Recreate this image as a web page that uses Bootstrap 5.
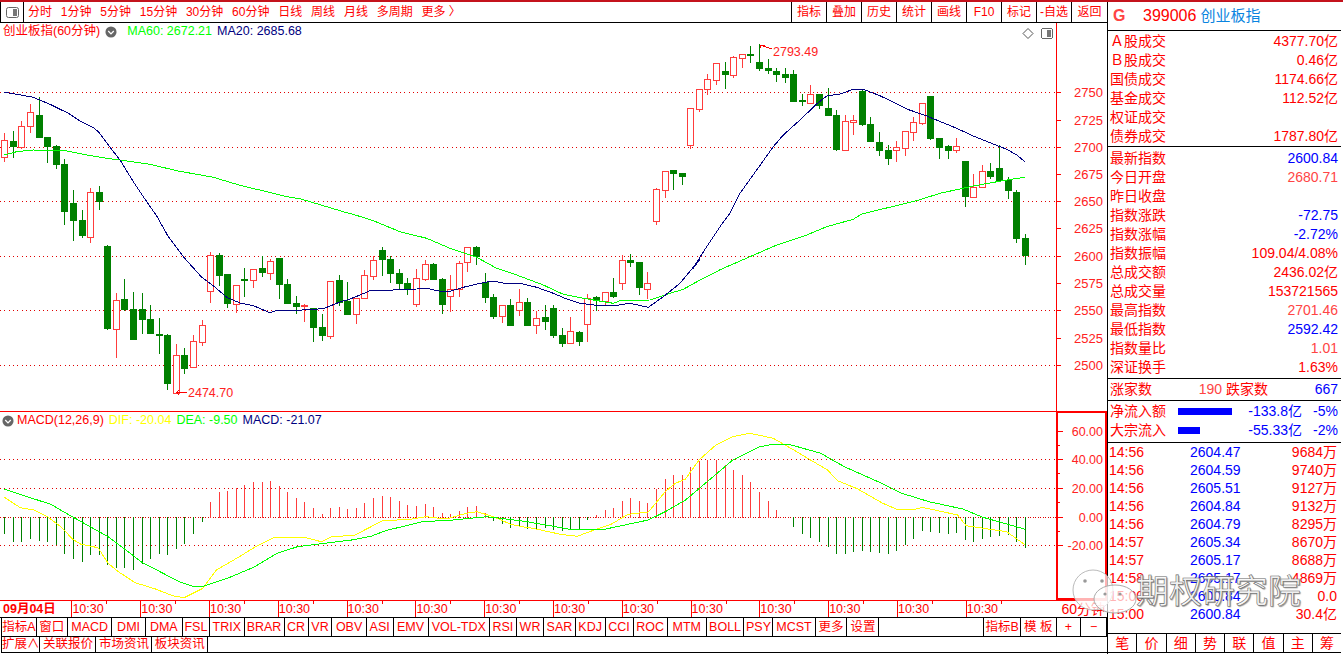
<!DOCTYPE html>
<html lang="zh-CN">
  <head>
    <meta charset="UTF-8" />
    <title>创业板指 60分钟</title>
    <link href="https://cdn.jsdelivr.net/npm/bootstrap@5.3.0/dist/css/bootstrap.min.css" rel="stylesheet" />
    <style>
      html, body { margin: 0; background: #fff; overflow: hidden; }
      body, svg text { font-family: "Liberation Sans", "Noto Sans CJK SC", sans-serif; }
      .app { width: 1343px; height: 654px; border-top: 2px solid #c4131c; color: #f00; position: relative; }
      .left-col { width: 1107px; }
      .tool-row { height: 21px; border-bottom: 1px solid #000; font-size: 12px; line-height: 20px; }
      .tool-icon { width: 24px; border-left: 1px solid #000; border-right: 1px solid #000; }
      .tool-links { gap: 8.8px; padding-left: 4px; }
      .tool-cell { width: 35px; border-left: 1px solid #000; text-align: center; }
      .tool-cell:last-child { width: 36px; }
      .chart-box { height: 389px; border-bottom: 1px solid #f00; position: relative; }
      .macd-box { height: 188px; position: relative; }
      .chart-box svg, .macd-box svg { display: block; }
      .legend { position: absolute; left: 3px; top: 0; font-size: 12.5px; line-height: 17px; white-space: nowrap; display: flex; align-items: center; }
      .macd-legend { left: 2px; top: 0; }
      .legend span { margin-right: 5px; }
      .legend svg { flex: none; }
      .dot-main { margin: 0 10px 0 5px; }
      .dot-macd { margin-right: 3px; }
      .c-ma60 { color: #0f0; }
      .c-ma20 { color: #000080; }
      .c-dif { color: #ff0; }
      .date-row { height: 18px; border-top: 1px solid #f00; border-bottom: 1px solid #000; font-size: 12.5px; line-height: 16px; }
      .date-lab { width: 71.4px; padding-left: 3px; font-weight: 700; }
      .date-tick { width: 68.8px; border-left: 1px solid #f00; position: relative; }
      .date-tick::after { content: ""; position: absolute; left: 34px; top: 0; height: 3px; border-left: 1px solid #f00; }
      .date-end { margin-left: auto; width: 50px; text-align: right; padding-right: 2px; font-size: 14px; white-space: nowrap; }
      .tab-row { border-bottom: 1px solid #000; font-size: 12.5px; white-space: nowrap; border-left: 1px solid #000; margin-left: 1px; }
      .tab-a { height: 19px; line-height: 18px; }
      .tab-b { height: 16px; line-height: 15px; }
      .tab-cell { border-right: 1px solid #000; text-align: center; overflow: visible; }
      .side { width: 234px; border-left: 1px solid #000; font-size: 14px; }
      .side-head { height: 29px; border-bottom: 1px solid #000; line-height: 26px; padding-left: 5px; }
      .code-g { font-size: 16px; font-weight: 700; color: #f44; width: 30px; }
      .code-no { font-size: 16px; margin-right: 4px; }
      .code-name { font-size: 15px; color: #0a84e0; }
      .side-block { border-bottom: 1px solid #000; padding: 1px 3px 0 2px; }
      .block-a { height: 116px; }
      .block-b { height: 232px; padding-top: 2px; }
      .block-c { height: 22px; line-height: 21px; padding-top: 0; }
      .block-d { height: 42px; }
      .kv-row { height: 19px; line-height: 19px; }
      .soft { color: #f44; }
      .c-blue { color: #00f; }
      .flow-lab { width: 56px; }
      .flow-track { width: 54px; margin-left: 12px; height: 7px; }
      .flow-bar { height: 7px; background: #00f; }
      .flow-val { width: 70px; text-align: right; }
      .flow-pct { margin-left: auto; }
      .tick-list { height: 190px; padding: 0 4px 0 1px; }
      .tick-row { height: 18px; line-height: 18px; }
      .tick-time { width: 81px; }
      .tick-vol { margin-left: auto; }
      .side-btns { height: 20px; border-top: 1px solid #000; border-bottom: 1px solid #000; line-height: 18px; }
      .side-btns span { flex: 1 1 0; text-align: center; border-left: 1px solid #000; }
      .side-btns span:first-child { border-left: 0; }
      .mark-icon { position: absolute; left: 1072px; top: 566px; }
      .mark-text { position: absolute; left: 1136px; top: 570px; font-size: 33px; line-height: 40px; color: rgba(255, 255, 255, 0.85); -webkit-text-stroke: 0.6px #666; text-shadow: 1px 1px 1px #999; white-space: nowrap; }
    </style>
  </head>

  <body>
    <div class="app d-flex">
      <div class="left-col d-flex flex-column">
        <!-- 工具栏 -->
        <div class="tool-row d-flex">
          <div class="tool-icon d-flex align-items-center justify-content-center">
            <svg width="13" height="11" viewBox="0 0 13 11"><rect x="0.5" y="0.5" width="12" height="10" rx="2" fill="#fff" stroke="#666"></rect><rect x="7" y="2" width="4" height="7" fill="#777"></rect></svg>
          </div>
          <div class="tool-links d-flex">
            <span>分时</span><span>1分钟</span><span>5分钟</span><span>15分钟</span><span>30分钟</span><span>60分钟</span><span>日线</span><span>周线</span><span>月线</span><span>多周期</span><span>更多 〉</span>
          </div>
          <div class="ms-auto d-flex">
            <span class="tool-cell">指标</span><span class="tool-cell">叠加</span><span class="tool-cell">历史</span><span class="tool-cell">统计</span><span class="tool-cell">画线</span><span class="tool-cell">F10</span><span class="tool-cell">标记</span><span class="tool-cell">-自选</span><span class="tool-cell">返回</span>
          </div>
        </div>

        <!-- K线 -->
        <div class="chart-box">
          <svg id="kline" width="1107" height="388" viewBox="0 23 1107 388"></svg>
          <div class="legend"><span class="me-0">创业板指(60分钟)</span>
            <svg class="dot-main" width="12" height="12" viewBox="0 0 13 13"><circle cx="6.5" cy="6.5" r="6" fill="#666"></circle><path d="M3.5 5.5 6.5 8.5 9.5 5.5" fill="none" stroke="#fff" stroke-width="1.4"></path></svg>
            <span class="c-ma60">MA60: 2672.21</span><span class="c-ma20">MA20: 2685.68</span>
          </div>
        </div>

        <!-- MACD -->
        <div class="macd-box">
          <svg id="macd" width="1107" height="188" viewBox="0 412 1107 188"></svg>
          <div class="legend macd-legend">
            <svg class="dot-macd" width="12" height="12" viewBox="0 0 13 13"><circle cx="6.5" cy="6.5" r="6" fill="#666"></circle><path d="M3.5 5.5 6.5 8.5 9.5 5.5" fill="none" stroke="#fff" stroke-width="1.4"></path></svg>
            <span>MACD(12,26,9)</span><span class="c-dif">DIF: -20.04</span><span class="c-ma60">DEA: -9.50</span><span class="c-ma20">MACD: -21.07</span>
          </div>
        </div>

        <!-- 时间轴 -->
        <div class="date-row d-flex" id="dates"><span class="date-lab">09月04日</span></div>

        <div class="tab-row tab-a d-flex" id="tabsA"></div>
        <div class="tab-row tab-b d-flex" id="tabsB"></div>
      </div>

      <!-- 右侧行情 -->
      <div class="side d-flex flex-column">
        <div class="side-head d-flex align-items-center"><span class="code-g">G</span><span class="code-no">399006</span><span class="code-name">创业板指</span></div>
        <div class="side-block block-a">
          <div class="kv-row d-flex justify-content-between"><span>Ａ股成交</span><span>4377.70亿</span></div>
          <div class="kv-row d-flex justify-content-between"><span>Ｂ股成交</span><span>0.46亿</span></div>
          <div class="kv-row d-flex justify-content-between"><span>国债成交</span><span>1174.66亿</span></div>
          <div class="kv-row d-flex justify-content-between"><span>基金成交</span><span>112.52亿</span></div>
          <div class="kv-row d-flex justify-content-between"><span>权证成交</span><span></span></div>
          <div class="kv-row d-flex justify-content-between"><span>债券成交</span><span>1787.80亿</span></div>
        </div>
        <div class="side-block block-b">
          <div class="kv-row d-flex justify-content-between"><span>最新指数</span><span class="c-blue">2600.84</span></div>
          <div class="kv-row d-flex justify-content-between"><span>今日开盘</span><span class="soft">2680.71</span></div>
          <div class="kv-row d-flex justify-content-between"><span>昨日收盘</span><span></span></div>
          <div class="kv-row d-flex justify-content-between"><span>指数涨跌</span><span class="c-blue">-72.75</span></div>
          <div class="kv-row d-flex justify-content-between"><span>指数涨幅</span><span class="c-blue">-2.72%</span></div>
          <div class="kv-row d-flex justify-content-between"><span>指数振幅</span><span>109.04/4.08%</span></div>
          <div class="kv-row d-flex justify-content-between"><span>总成交额</span><span>2436.02亿</span></div>
          <div class="kv-row d-flex justify-content-between"><span>总成交量</span><span>153721565</span></div>
          <div class="kv-row d-flex justify-content-between"><span>最高指数</span><span class="soft">2701.46</span></div>
          <div class="kv-row d-flex justify-content-between"><span>最低指数</span><span class="c-blue">2592.42</span></div>
          <div class="kv-row d-flex justify-content-between"><span>指数量比</span><span class="soft">1.01</span></div>
          <div class="kv-row d-flex justify-content-between"><span>深证换手</span><span>1.63%</span></div>
        </div>
        <div class="side-block block-c d-flex justify-content-between"><span>涨家数</span><span><span class="soft">190</span> 跌家数</span><span class="c-blue">667</span></div>
        <div class="side-block block-d">
          <div class="kv-row d-flex align-items-center"><span class="flow-lab">净流入额</span><span class="flow-track"><span class="flow-bar d-block" style="width:54px"></span></span><span class="flow-val c-blue">-133.8亿</span><span class="flow-pct c-blue">-5%</span></div>
          <div class="kv-row d-flex align-items-center"><span class="flow-lab">大宗流入</span><span class="flow-track"><span class="flow-bar d-block" style="width:22px"></span></span><span class="flow-val c-blue">-55.33亿</span><span class="flow-pct c-blue">-2%</span></div>
        </div>
        <div class="tick-list" id="ticks"></div>
        <div class="side-btns d-flex"><span>笔</span><span>价</span><span>细</span><span>势</span><span>联</span><span>值</span><span>主</span><span>筹</span></div>
      </div>

      <!-- 水印 -->
      <svg class="mark-icon" width="68" height="50" viewBox="1072 568 68 50">
        <ellipse cx="1093" cy="590" rx="20" ry="20" fill="#fff" fill-opacity="0.7" stroke="#bbb"></ellipse>
        <ellipse cx="1115" cy="599" rx="21" ry="14" fill="#fff" fill-opacity="0.7" stroke="#aaa"></ellipse>
        <circle cx="1085" cy="581" r="1.8" fill="#999"></circle><circle cx="1102" cy="581" r="1.8" fill="#999"></circle>
        <circle cx="1105" cy="594" r="1.6" fill="#999"></circle><circle cx="1120" cy="594" r="1.6" fill="#999"></circle>
      </svg>
      <div class="mark-text">期权研究院</div>
    </div>

    <script>
      const NS = 'http://www.w3.org/2000/svg';
      function add(svg, tag, attrs, text) {
        const el = document.createElementNS(NS, tag);
        for (const k in attrs) el.setAttribute(k, attrs[k]);
        if (text) el.textContent = text;
        svg.appendChild(el);
        return el;
      }
      const barX = (i) => Math.round(4.33 + i * 8.575);

      // K线数据: 类型(1阳0阴), 实体上, 实体下, 影线上, 影线下 (放大图坐标 / 3 + 偏移)
      const k1 = [[1,241,292,219,302],[0,243,257,213,290],[1,199,262,183,265],[1,157,199,132,216],[0,165,231,112,231],[0,231,257,231,305],[0,258,312,254,323],[0,312,453,297,492],[0,429,480,390,540],[0,480,525,450,531],[1,397,532,384,546],[0,396,423,378,446],[0,558,804,555,807],[1,721,806,699,891],[0,717,747,657,750],[0,747,837,696,837],[0,747,777,699,819],[0,777,819,735,819],[0,822,824,774,879],[0,825,969,822,987],[1,886,998,852,1000],[0,885,924,864,939],[1,844,922,825,922],[1,796,845,780,855],[1,586,692,576,726],[0,585,645,579,676],[0,642,729,642,741],[1,676,731,676,756],[0,657,659,624,708],[1,628,661,628,681],[0,624,636,588,648],[1,604,638,598,657],[0,594,672,594,714],[0,672,729,657,729],[0,729,738,708,759],[1,735,739,732,783],[0,745,801,745,843],[0,801,825,762,840],[1,664,827,664,834],[0,660,726,645,735],[0,723,762,666,762]];
      const k2 = [[1,295,341,295,369],[1,226,293,210,293],[1,181,227,168,237],[0,150,177,141,225],[0,177,219,168,246],[0,219,249,207,264],[0,249,268,234,282],[1,235,311,207,318],[1,193,236,180,240],[0,192,237,190,237],[0,237,312,234,339],[1,268,287,225,333],[1,190,268,183,288],[1,142,187,142,213],[0,141,168,138,192],[0,246,291,219,306],[0,291,348,282,354],[1,316,349,316,366],[0,315,375,297,375],[1,307,329,267,345],[0,306,375,294,375],[1,355,376,333,399],[0,351,363,315,387],[0,324,405,315,411],[0,405,429,384,438],[1,394,430,351,430],[0,396,423,393,435],[1,293,371,282,423],[0,291,299,288,330],[1,277,302,277,316],[0,276,288,234,291],[1,181,248,165,267],[0,181,186,162,198],[0,186,261,186,282],[1,250,266,216,294]];
      const k3 = [[1,478,572,474,582],[1,424,479,424,501],[0,420,429,420,477],[0,429,438,429,462],[1,235,345,235,354],[1,178,236,178,243],[1,148,176,132,192],[1,100,149,100,162],[0,123,132,96,174],[1,82,134,78,141],[1,73,83,73,111],[0,72,75,48,96],[0,96,114,42,120],[0,115,120,87,129],[0,123,132,114,153],[0,132,141,114,156],[0,132,213,120,213],[0,209,212,192,225],[1,193,218,165,218],[0,192,225,192,234],[0,234,255,174,255],[0,255,357,240,360],[1,274,359,255,359],[1,271,275,255,312],[0,183,282,180,285],[0,282,333,261,333],[0,336,360,306,375],[0,360,384,345,402],[1,352,359,333,393],[1,304,353,304,375],[1,277,305,261,330],[1,220,278,220,282],[0,198,324,198,327],[0,324,351,324,384],[0,348,360,345,384],[1,349,361,324,366],[0,393,498,393,528],[1,471,500,432,500],[1,424,472,405,472],[0,423,438,399,444],[0,414,450,345,450],[0,450,480,441,504],[0,486,624,480,636],[0,624,675,612,702]];

      const UP = '#ff3c3c', DOWN = '#008000', RED = '#f00';
      const kSvg = document.getElementById('kline');
      kSvg.setAttribute('shape-rendering', 'crispEdges');

      // 价格网格
      [92, 147, 201, 256, 310, 365].forEach((y) => {
        add(kSvg, 'line', { x1: 0, x2: 1056, y1: y + 0.5, y2: y + 0.5, stroke: '#e00000', 'stroke-dasharray': '1 3.3' });
      });
      add(kSvg, 'line', { x1: 1056.5, x2: 1056.5, y1: 23, y2: 411, stroke: RED });
      [[2750, 92], [2725, 120], [2700, 147], [2675, 174], [2650, 201], [2625, 228], [2600, 256], [2575, 283], [2550, 310], [2525, 338], [2500, 365]].forEach(([p, y]) => {
        add(kSvg, 'line', { x1: 1057, x2: 1061, y1: y + 0.5, y2: y + 0.5, stroke: RED });
        add(kSvg, 'text', { x: 1103, y: y + 5, 'text-anchor': 'end', 'font-size': 13, fill: '#f22', 'shape-rendering': 'auto' }, String(p));
      });

      function candle(i, c, off) {
        const y = (v) => Math.round(off + v / 3);
        const x = barX(i);
        const col = c[0] ? UP : DOWN;
        add(kSvg, 'line', { x1: x + 0.5, x2: x + 0.5, y1: y(c[3]), y2: y(c[4]) + 1, stroke: col });
        if (c[0]) {
          add(kSvg, 'rect', { x: x - 3 + 0.5, y: y(c[1]) + 0.5, width: 6, height: Math.max(1, y(c[2]) - y(c[1])), fill: '#fff', stroke: col });
        } else {
          add(kSvg, 'rect', { x: x - 3, y: y(c[1]), width: 7, height: Math.max(1, y(c[2]) - y(c[1]) + 1), fill: col });
        }
      }
      k1.forEach((c, i) => candle(i, c, 60));
      k2.forEach((c, i) => candle(i + 41, c, 200));
      k3.forEach((c, i) => candle(i + 76, c, 30));

      function line(svg, pts, col) {
        add(svg, 'polyline', { points: pts.map((p) => p.join(',')).join(' '), fill: 'none', stroke: col, 'stroke-width': 1 });
      }
      const z = (arr, ox, oy, sx, sy) => arr.map((p) => [(ox + p[0] / sx).toFixed(1), (oy + p[1] / (sy || sx)).toFixed(1)]);

      const ma60 = [].concat(
        z([[13,285],[50,275],[100,270],[140,271],[200,273],[260,285],[320,295],[360,300],[450,313],[530,332],[640,352],[720,376],[820,400],[860,410],[900,416],[960,434],[1040,458]], 0, 60, 3),
        z([[0,40],[70,62],[150,95],[230,115],[300,145],[380,172],[440,205],[500,225],[580,255],[640,283],[700,295],[790,310],[810,302],[900,300],[960,280],[1000,268],[1050,240]], 350, 200, 3),
        z([[243,718],[330,680],[410,645],[500,615],[560,590],[640,568],[665,552],[830,512],[900,490],[1000,468],[1100,450],[1155,442]], 640, 30, 3));
      const ma20 = [].concat(
        z([[13,97],[50,103],[100,112],[150,133],[205,160],[240,183],[280,203],[295,215],[330,262],[360,300],[400,365],[440,425],[470,468],[505,530],[550,590],[605,652],[640,677],[680,712],[720,729],[760,737],[810,758],[830,751],[890,751],[970,746],[1020,726]], 0, 60, 3),
        z([[0,297],[30,285],[65,270],[130,270],[200,267],[235,266],[270,274],[300,274],[340,262],[390,250],[430,243],[470,251],[510,250],[560,262],[610,280],[650,297],[690,310],[740,316],[800,316],[840,310],[895,322],[940,290],[990,250],[1050,178]], 350, 200, 3),
        z([[157,718],[200,650],[240,590],[270,550],[300,490],[350,420],[400,350],[430,315],[480,270],[530,222],[560,198],[600,192],[640,178],[670,178],[720,197],[800,237],[860,258],[950,295],[1000,318],[1060,342],[1100,358],[1130,375],[1155,395]], 640, 30, 3));
      line(kSvg, ma60, '#0f0');
      line(kSvg, ma20, '#000080');

      // 最高最低标注
      add(kSvg, 'path', { d: 'M176 392.5H187M176 392.5l3-2M176 392.5l3 2', stroke: RED, fill: 'none' });
      add(kSvg, 'text', { x: 188, y: 397, 'font-size': 12.5, fill: '#f22', 'shape-rendering': 'auto' }, '2474.70');
      add(kSvg, 'path', { d: 'M760 45L772 49M760 45h5M760 45v3', stroke: RED, fill: 'none' });
      add(kSvg, 'text', { x: 773, y: 56, 'font-size': 12.5, fill: '#f22', 'shape-rendering': 'auto' }, '2793.49');

      // 右上小图标
      add(kSvg, 'path', { d: 'M1028 28.5l5 5-5 5-5-5z', fill: '#fff', stroke: '#555', 'shape-rendering': 'auto' });
      add(kSvg, 'rect', { x: 1041.5, y: 28.5, width: 11, height: 10, rx: 2, fill: '#fff', stroke: '#666' });
      add(kSvg, 'rect', { x: 1047, y: 30, width: 4, height: 7, fill: '#777' });

      // MACD
      const mSvg = document.getElementById('macd');
      mSvg.setAttribute('shape-rendering', 'crispEdges');
      [459, 488, 545].forEach((y) => {
        add(mSvg, 'line', { x1: 0, x2: 1056, y1: y + 0.5, y2: y + 0.5, stroke: '#e00000', 'stroke-dasharray': '1 3.3' });
      });
      add(mSvg, 'line', { x1: 0, x2: 1056, y1: 517.5, y2: 517.5, stroke: '#e00000', 'stroke-dasharray': '1 1.5' });

      const bars = [383,407,407,398,404,407,416,443,458,467,446,446,476,485,485,491,473,458,443,446,428,413,383,347,
        291,261,258,249,240,231,231,228,243,261,279,291,309,327,309,306,312,309,294,279,273,276,288,300,303,297,306,324,327,318,306,303,324,
        345,354,366,363,369,369,366,372,375,369,369,342,
        330,315,309,288,279,288,294,252,222,210,210,186,168,165,165,180,195,210,231,261,288,315,
        0,363,384,396,408,422,444,444,438,435,438,441,444,435,417,399,375,378,381,384,381,402,408,399,393,390,387,408,426];
      const zero = 517;
      bars.forEach((v, i) => {
        if (!v) return;
        const y = Math.round(405 + v / 3);
        const x = barX(i) + 0.5;
        add(mSvg, 'line', { x1: x, x2: x, y1: Math.min(y, zero), y2: Math.max(y, zero) + 1, stroke: v > 337 ? DOWN : UP, 'stroke-width': 1 });
      });

      const dif = [].concat(
        z([[13,277],[60,308],[100,315],[140,335],[180,365],[215,403],[240,418],[290,428],[320,475],[350,500],[400,533],[460,552],[510,572],[545,578],[600,550],[640,495],[700,460],[760,423],[810,398],[900,397],[950,410],[980,396],[1050,390],[1130,348],[1220,342],[1260,335],[1320,342],[1380,325],[1410,320],[1460,335],[1510,358],[1560,368]], 0, 405, 2.958, 3),
        z([[0,368],[90,388],[140,394],[190,375],[240,358],[290,328],[350,321],[400,260],[430,235],[460,222],[500,165],[550,120],[600,95],[650,85],[720,100],[780,135],[880,195],[910,227],[970,252],[1040,293],[1085,313],[1140,313],[1160,307],[1265,330],[1290,362],[1410,380],[1465,420]], 530, 405, 2.958, 3));
      const dea = [].concat(
        z([[13,253],[90,278],[150,298],[210,333],[320,395],[420,472],[530,530],[570,544],[605,543],[680,517],[750,487],[820,445],[880,425],[960,415],[1040,405],[1100,393],[1140,377],[1250,350],[1340,345],[1440,335],[1480,340],[1560,350]], 0, 405, 2.958, 3),
        z([[0,352],[60,362],[130,375],[220,373],[280,360],[350,345],[400,320],[460,285],[530,225],[600,165],[680,125],[720,118],[770,119],[860,145],[930,185],[1030,230],[1100,265],[1180,290],[1280,312],[1340,337],[1465,373]], 530, 405, 2.958, 3));
      line(mSvg, dif, '#ff0');
      line(mSvg, dea, '#0f0');

      // MACD 右轴红框
      add(mSvg, 'rect', { x: 1056, y: 412, width: 2, height: 188, fill: RED });
      add(mSvg, 'rect', { x: 1105, y: 412, width: 2, height: 188, fill: RED });
      add(mSvg, 'rect', { x: 1056, y: 598, width: 51, height: 2, fill: RED });
      add(mSvg, 'rect', { x: 1056, y: 411, width: 51, height: 2, fill: RED });
      [[60, 431], [40, 459], [20, 488], [0, 517], [-20, 545]].forEach(([v, y]) => {
        add(mSvg, 'line', { x1: 1058, x2: 1063, y1: y + 0.5, y2: y + 0.5, stroke: RED });
        add(mSvg, 'text', { x: 1103, y: y + 4.5, 'text-anchor': 'end', 'font-size': 12.5, fill: '#f22', 'shape-rendering': 'auto' }, v.toFixed(2));
      });
      [445, 473, 502, 531].forEach((y) => {
        add(mSvg, 'line', { x1: 1058, x2: 1060, y1: y + 0.5, y2: y + 0.5, stroke: RED });
      });

      // 时间轴
      const dates = document.getElementById('dates');
      for (let i = 0; i < 14; i++) {
        const s = document.createElement('span');
        s.className = 'date-tick';
        s.textContent = '10:30';
        dates.appendChild(s);
      }
      const endLab = document.createElement('span');
      endLab.className = 'date-end';
      endLab.textContent = '60分钟';
      dates.appendChild(endLab);

      // 底部标签, 数字是每格右边线的位置
      function tabs(id, list) {
        const box = document.getElementById(id);
        let prev = 2;
        list.forEach(([name, edge]) => {
          const s = document.createElement('span');
          s.className = 'tab-cell';
          s.textContent = name;
          s.style.width = (edge - prev) + 'px';
          box.appendChild(s);
          prev = edge;
        });
      }
      tabs('tabsA', [['指标A',36.8],['窗口',67.9],['MACD',112.5],['DMI',145.7],['DMA',182.9],['FSL',210],['TRIX',244.6],['BRAR',284.6],['CR',308.6],['VR',332.5],['OBV',366.8],['ASI',393.6],['EMV',428.6],['VOL-TDX',490],['RSI',516.8],['WR',544.4],['SAR',575.7],['KDJ',605.7],['CCI',633.6],['ROC',667.9],['MTM',706.8],['BOLL',744.6],['PSY',773.6],['MCST',815.7],['更多',847.5],['设置',879.6],['',984.6],['指标B',1021],['模 板',1056.8],['+',1081.4],['−',1107]]);
      tabs('tabsB', [['扩展∧',40.4],['关联报价',96.4],['市场资讯',152.5],['板块资讯',208.2]]);

      // 分笔
      const ticks = [['14:56','2604.47','9684万'],['14:56','2604.59','9740万'],['14:56','2605.51','9127万'],['14:56','2604.84','9132万'],['14:56','2604.79','8295万'],['14:57','2605.34','8670万'],['14:57','2605.17','8688万'],['14:58','2605.17','4869万'],['15:00','2600.84','0.0'],['15:00','2600.84','30.4亿']];
      document.getElementById('ticks').innerHTML = ticks.map((t) =>
        '<div class="tick-row d-flex"><span class="tick-time">' + t[0] + '</span><span class="c-blue">' + t[1] + '</span><span class="tick-vol">' + t[2] + '</span></div>'
      ).join('');
    </script>
    <script src="https://cdn.jsdelivr.net/npm/bootstrap@5.3.0/dist/js/bootstrap.bundle.min.js"></script>
  </body>
</html>
